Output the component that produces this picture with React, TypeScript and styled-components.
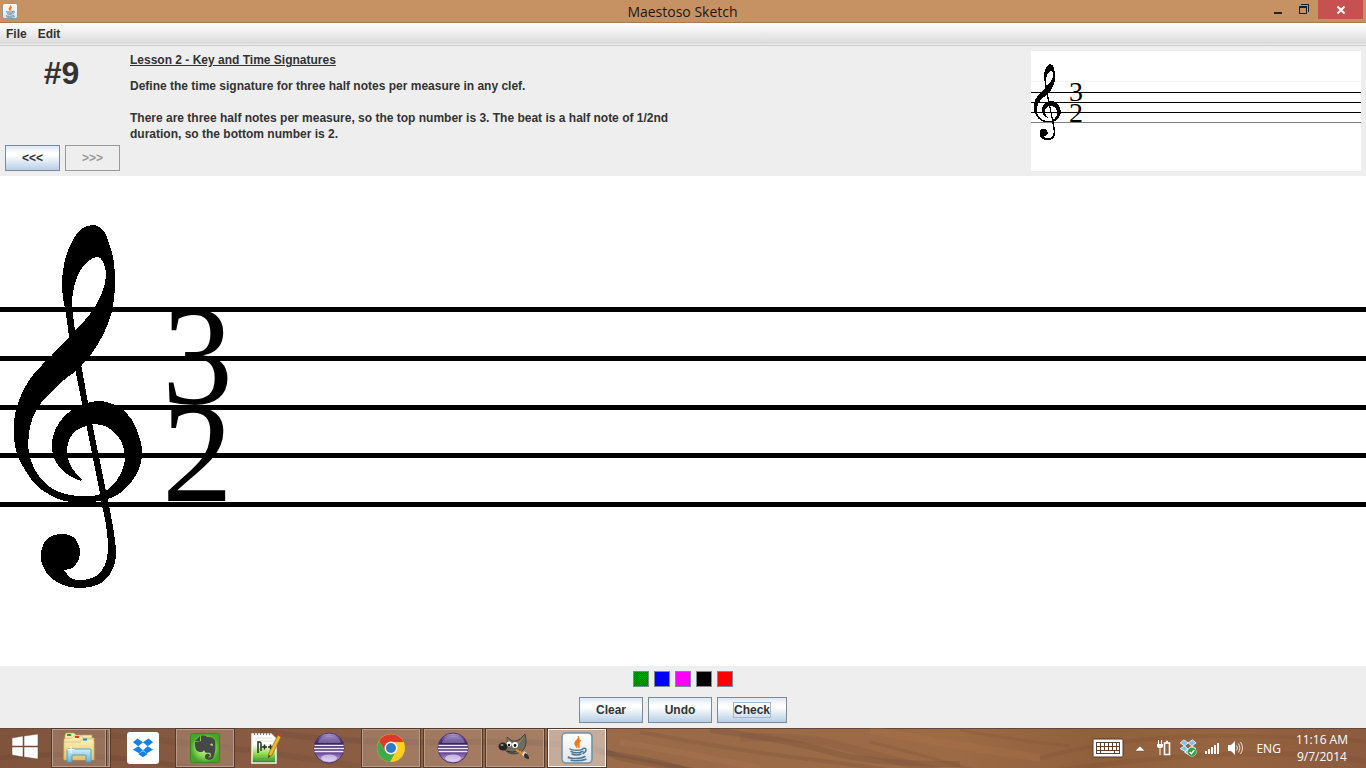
import React from "react";
import styled, { createGlobalStyle, css } from "styled-components";

const GlobalStyle = createGlobalStyle`
  * { box-sizing: border-box; }
  body { margin: 0; }
  button { font: inherit; color: inherit; }
`;

const ui = `"Open Sans", "Noto Sans", sans-serif`;
const swing = `"Liberation Sans", Arial, sans-serif`;

const Desktop = styled.div`
  display: flex;
  flex-direction: column;
  min-height: 100vh;
  background: #eee;
  color: #333;
  font: bold 12px/16px ${swing};
`;

/* ---------- window frame ---------- */

const TitleBar = styled.header`
  display: grid;
  grid-template-columns: 1fr auto 1fr;
  height: 23px;
  padding: 0 3px 0 2px;
  background: #c69264;
  border-bottom: 1px solid #a87a52;
`;

const AppIcon = styled.span`
  display: flex;
  padding-top: 3px;
`;

const WindowTitle = styled.h1`
  margin: 0;
  color: #1d1814;
  font: 14px/24px ${ui};
`;

const WindowControls = styled.div`
  display: flex;
  justify-content: flex-end;
  align-items: flex-start;
`;

const WindowButton = styled.button<{ $close?: boolean }>`
  display: flex;
  width: ${(p) => (p.$close ? 45 : 27)}px;
  height: 19px;
  padding: 0;
  align-items: center;
  justify-content: center;
  border: 0;
  background: ${(p) => (p.$close ? "#c75050" : "transparent")};
`;

const MenuBar = styled.nav`
  display: flex;
  height: 23px;
  background: linear-gradient(#fff, #dadada 21px, #eee 21px);
  border-bottom: 1px solid #ccc;
`;

const MenuButton = styled.button`
  padding: 0 5px 0 6px;
  border: 0;
  background: none;
  line-height: 21px;
`;

/* ---------- lesson header ---------- */

const LessonHeader = styled.section`
  display: flex;
  min-height: 130px;
  padding: 5px;
`;

const LessonNav = styled.div`
  display: flex;
  flex-direction: column;
  justify-content: space-between;
  width: 115px;
  margin-right: 10px;
`;

const LessonNumber = styled.div`
  padding: 6px 2px 0 0;
  font-size: 32px;
  line-height: 32px;
  text-align: center;
`;

const ButtonRow = styled.div`
  display: flex;
  justify-content: center;
  gap: 5px;
`;

const SwingButton = styled.button<{ $width: number }>`
  width: ${(p) => p.$width}px;
  height: 26px;
  padding: 0;
  border: 1px solid #7a8a99;
  background: linear-gradient(#dde8f3, #fff 30%, #fff 38%, #b8cfe5);
  line-height: 16px;
  &:disabled {
    color: #999;
    border-color: #999;
    background: #eee;
  }
`;

const FocusedLabel = styled.span`
  outline: 1px solid #a3b8cc;
`;

const LessonText = styled.div`
  flex: 1;
`;

const LessonTitle = styled.h2`
  margin: 0 0 10px;
  padding-top: 1px;
  font-size: 12px;
  line-height: 16px;
  text-decoration: underline;
`;

const LessonParagraph = styled.p`
  max-width: 560px;
  margin: 0 0 16px;
`;

const Preview = styled.svg`
  width: 330px;
  height: 120px;
  background: #fff;
`;

/* ---------- sketching area ---------- */

const Sketch = styled.main`
  display: flex;
  flex: 1;
  min-height: 420px;
  background: #fff;
`;

const SketchSvg = styled.svg`
  width: 100%;
`;

const ToolPanel = styled.section`
  display: flex;
  flex-direction: column;
  gap: 10px;
  padding: 5px 0;
`;

const Swatch = styled.button<{ $color: string }>`
  width: 16px;
  height: 16px;
  padding: 0;
  border: 1px solid #7a8a99;
  background: ${(p) => p.$color};
`;

/* ---------- taskbar ---------- */

const TaskBar = styled.footer`
  position: relative;
  display: flex;
  height: 40px;
  padding-right: 18px;
  align-items: stretch;
  overflow: hidden;
  background: linear-gradient(90deg, #80543c, #8a5d43 25%, #9a6a49 45%, #9c6a45 70%, #90603c 80%, #966440 90%, #8c5a3e);
  box-shadow: inset 0 1px #63493b;
`;

const Grain = styled.svg`
  position: absolute;
  inset: 0;
  width: 100%;
  height: 100%;
`;

const StartButton = styled.button`
  position: relative;
  width: 51px;
  padding: 0 2px 0 0;
  border: 0;
  background: none;
`;

const TaskList = styled.div`
  position: relative;
  display: flex;
  flex: 1;
  gap: 2px;
`;

const TaskButton = styled.button<{ $state?: "open" | "active" | "stacked" }>`
  display: flex;
  width: 60px;
  padding: 0;
  align-items: center;
  justify-content: center;
  border: 1px solid transparent;
  background: none;
  ${(p) =>
    p.$state &&
    css`
      border-color: #55392b;
      background: ${p.$state === "active" ? "rgba(235,228,220,.55)" : "rgba(210,190,175,.27)"};
      box-shadow: inset 0 0 0 1px ${p.$state === "active" ? "#f7f2ee" : "#b59c8d"};
    `}
  ${(p) =>
    p.$state === "stacked" &&
    css`
      padding-right: 5px;
      background: linear-gradient(90deg, transparent 53px, #b59c8d 53px, #b59c8d 54px, #55392b 54px, #55392b 55px, transparent 55px),
        rgba(210, 190, 175, 0.27);
    `}
`;

const Tray = styled.div`
  position: relative;
  display: flex;
  align-items: center;
  gap: 7px;
  color: #fff;
  font: 12px/17px ${ui};
`;

const TrayButton = styled.button`
  display: flex;
  padding: 0;
  border: 0;
  background: none;
`;

const Language = styled(TrayButton)`
  margin: 0 8px 0 6px;
`;

const Clock = styled.time`
  text-align: center;
`;

/* ---------- clef drawing ---------- */

type Point = [number, number];

/* Joins smooth runs of points with corners where one run meets the next. */
const outline = (...runs: Point[][]) =>
  runs
    .map((run, r) => {
      let d = r === 0 ? `M${run[0]}` : `L${run[0]}`;
      for (let i = 0; i < run.length - 1; i++) {
        const p0 = run[Math.max(i - 1, 0)];
        const p1 = run[i];
        const p2 = run[i + 1];
        const p3 = run[Math.min(i + 2, run.length - 1)];
        d += `C${p1[0] + (p2[0] - p0[0]) / 6},${p1[1] + (p2[1] - p0[1]) / 6} ${p2[0] - (p3[0] - p1[0]) / 6},${p2[1] - (p3[1] - p1[1]) / 6} ${p2}`;
      }
      return d;
    })
    .join("") + "Z";

const clefBody = outline(
  [
    [76, 195], [64, 204], [53, 214], [41, 227], [33, 241], [29, 257], [29, 277], [35, 294], [45, 307], [59, 316],
    [77, 320], [92, 320], [101, 318],
  ],
  [[107, 314], [117, 304], [123, 292], [125, 280], [122, 267], [115, 257], [105, 250], [93, 248]],
  [[87, 250], [77, 254], [70, 262], [67, 273], [69, 286], [75, 296], [82, 303]],
  [[81, 305], [72, 301], [63, 295], [56, 286], [52, 274], [53, 260], [59, 247], [68, 237], [81, 229], [97, 225], [110, 227], [122, 233], [132, 244], [138, 257], [142, 272], [141, 286], [136, 299], [127, 311], [117, 319], [108, 323]],
  [[100, 325], [82, 327], [65, 325], [50, 319], [36, 309], [25, 294], [17, 278], [14, 262], [14, 245], [18, 227], [25, 211], [33, 199], [42, 189], [52, 179], [69, 161]],
  [
    [69, 161], [66, 138], [63, 122], [62, 104], [65, 84], [71, 68], [80, 54], [92, 49], [103, 54], [110, 70],
    [114, 87], [115, 105], [114, 123], [111, 139], [104, 157], [96, 171], [90, 180], [82, 189], [76, 195],
  ]
);

const clefHole = outline(
  [[75, 154], [73, 139], [72, 124], [75, 107], [80, 95], [87, 86], [97, 81], [103, 86], [106, 99], [103, 114], [95, 131], [85, 144], [75, 154]]
);

const clefStem = outline(
  [[69, 161], [82, 228]],
  [[82, 228], [100, 317]],
  [[100, 317], [102, 329], [105, 343], [107, 357], [108, 374], [105, 389], [96, 400], [82, 404], [71, 402], [64, 394]],
  [[64, 394], [72, 392], [78, 385], [80, 375], [76, 364], [69, 359], [59, 358], [48, 362], [42, 372], [41, 384], [46, 396], [54, 404], [66, 410], [82, 412], [97, 409], [107, 402], [114, 390], [116, 375], [114, 357], [111, 340], [108, 325]],
  [[108, 325], [88, 227]],
  [[88, 227], [75, 154]]
);

const TrebleClef = () => (
  <g fill="#000" shapeRendering="crispEdges">
    <path d={clefBody + clefHole} fillRule="evenodd" />
    <path d={clefStem} />
  </g>
);

/* ---------- icons ---------- */

const JavaIcon = ({ size }: { size: number }) => (
  <svg width={size} height={size} viewBox="0 0 32 32" aria-hidden="true">
    <defs>
      <linearGradient id="javaTile" x2="0" y2="1">
        <stop offset="0" stopColor="#fff" />
        <stop offset="1" stopColor="#dfe3e6" />
      </linearGradient>
    </defs>
    <rect x="1" y="1" width="30" height="30" rx="4" fill="url(#javaTile)" stroke="#6f93ab" strokeWidth="1.6" />
    <path d="M17 4c2 3-5 5-3 9l2 3c-1-5 5-6 1-12zM20 8c-3 1-5 4-2 8 1-3-1-4 2-8z" fill="#ec7a1c" stroke="#ec7a1c" strokeWidth=".7" />
    <g fill="none" stroke="#4d7896" strokeLinecap="round" strokeWidth="1.5">
      <path d="M9 17c2 1.500 11 1.500 13 0M10 19.500c3 1.500 8 1.500 12-.3M11 22c2 1.200 7 1.200 9 0M22 16.500c4-1.500 4 3 0 5M8 25c-4 1 10 3 16-.5M10 28.200c5 .8 11 .5 15-1" />
    </g>
  </svg>
);

const WindowsIcon = () => (
  <svg width="28" height="27" viewBox="0 0 28 27" fill="#fff" stroke="#6b4633" strokeWidth=".5" aria-hidden="true">
    <path d="M1 5l11-2v10H1zM13 3l14-2v12H13zM1 14h11v10L1 22zM13 14h14v12l-14-2z" />
  </svg>
);

const FolderIcon = () => (
  <svg width="32" height="32" viewBox="0 0 32 32" aria-hidden="true">
    <defs>
      <linearGradient id="folder" x2="0" y2="1">
        <stop offset="0" stopColor="#fbf1b8" />
        <stop offset="1" stopColor="#e3c466" />
      </linearGradient>
      <linearGradient id="tray" x2="0" y2="1">
        <stop offset="0" stopColor="#d3effa" />
        <stop offset="1" stopColor="#63b3da" />
      </linearGradient>
    </defs>
    <path d="M2 3l1-2h8l2 2h16v24H1z" fill="url(#folder)" stroke="#bd9c4c" strokeWidth=".7" />
    <path d="M4 2h4v2H4z" fill="#15ad2e" />
    <path d="M1 7l8-1 2-2h8l1 2h11v21H1z" fill="url(#folder)" stroke="#cfb163" strokeWidth=".6" />
    <path d="M12 4h4v2h-4z" fill="#d5431f" />
    <path d="M1 10h16l2-3h11l1 3v18H1z" fill="url(#folder)" stroke="#cfb163" strokeWidth=".6" />
    <path d="M20 6.500h4v2h-4z" fill="#1686d8" />
    <path d="M4 30V18q0-1 1-1h22q1 0 1 1v12h-5v-6q0-1-1-1H10q-1 0-1 1v6z" fill="url(#tray)" stroke="#4b9dc4" strokeWidth=".9" />
    <path d="M8 14v7M4.500 17.500h7" stroke="#fff" />
  </svg>
);

const boxes = "M9 7l7 5-6 5-7-5zM23 7l6 5-7 5-6-5zM10 17l6 5-5 4-8-4.500zM22 17l7 4.500-8 4.500-5-4zM16 23l6 4-6 4-6-4z";

const DropboxIcon = () => (
  <svg width="32" height="32" viewBox="0 0 32 32" aria-hidden="true">
    <rect width="32" height="32" rx="3" fill="#fff" />
    <path transform="translate(3.500 1) scale(.78)" d={boxes} fill="#1381e5" />
  </svg>
);

const EvernoteIcon = () => (
  <svg width="32" height="32" viewBox="0 0 32 32" aria-hidden="true">
    <defs>
      <radialGradient id="ever">
        <stop offset="0" stopColor="#d6f5a4" />
        <stop offset=".6" stopColor="#8ad655" />
        <stop offset="1" stopColor="#45a528" />
      </radialGradient>
    </defs>
    <rect x="1.500" y="1.500" width="29" height="29" rx="2" fill="url(#ever)" stroke="#3c861f" />
    <path d="M12 4c3-1 5 0 6 1 5 0 7 1 8 4 1 5 0 14-2 17-2 3-8 2-8-1 0-4 5-4 5-1l-2 1c1 1 3 1 3-2 0-4-4-1-6-3l-1-2c-1 3-5 2-7 1-2-2-2-6-2-9l6-1z" fill="#454844" />
    <path d="M11 4v5H6z" fill="#454844" />
    <path d="M21 13c1-2 3-2 3 1z" fill="#a8dc70" />
  </svg>
);

const NotepadIcon = () => (
  <svg width="32" height="32" viewBox="0 0 32 32" aria-hidden="true">
    <defs>
      <linearGradient id="note" x2="0" y2="1">
        <stop offset=".35" stopColor="#fff" />
        <stop offset=".7" stopColor="#8bdb45" />
        <stop offset="1" stopColor="#16851c" />
      </linearGradient>
    </defs>
    <path d="M1 2h19l5 5v24H1z" fill="url(#note)" stroke="#f5f5ef" strokeWidth="1.500" />
    <path d="M3 2h18" stroke="#777" strokeWidth="2" strokeDasharray="1 2" />
    <path d="M4 6h17M4 9h20M4 25h20M4 28h20" stroke="#a2bb99" strokeWidth=".4" />
    <path d="M7 21V10h2q1 0 1 2v7M11 15h5M13.500 12.500v5M17 15h5M19.500 12.500v5" fill="none" stroke="#232d20" strokeWidth="1.500" />
    <path d="M17 26l1-5L27 3l3 2-9 18z" fill="#f2b927" stroke="#9c681c" strokeWidth=".8" />
    <path d="M27 3l1-2 3 1-1 3z" fill="#b74435" />
    <path d="M17 26l1-3 1.500 1z" fill="#4a351e" />
  </svg>
);

const EclipseIcon = () => (
  <svg width="32" height="32" viewBox="0 0 32 32" aria-hidden="true">
    <defs>
      <linearGradient id="ecl" x2="0" y2="1">
        <stop offset="0" stopColor="#b9a6d6" />
        <stop offset=".2" stopColor="#5d4288" />
        <stop offset=".42" stopColor="#2d1750" />
        <stop offset=".65" stopColor="#64458f" />
        <stop offset="1" stopColor="#d2bdf0" />
      </linearGradient>
    </defs>
    <circle cx="16" cy="16" r="15" fill="url(#ecl)" stroke="#4c326e" />
    <path d="M5 11C7 2 25 1 28 11z" fill="#c8b9e0" opacity=".38" />
    <path d="M1.500 13.500h29M1 16.500h30M1.500 19.500h29" stroke="#f0eaf8" strokeWidth="1.400" />
    <ellipse cx="16" cy="26" rx="8" ry="3.500" fill="#f3e9ff" opacity=".6" />
  </svg>
);

const ChromeIcon = () => (
  <svg width="32" height="32" viewBox="0 0 32 32" aria-hidden="true">
    <circle cx="16" cy="16" r="14" fill="#fbcf22" />
    <path d="M4 9A14 14 0 0 1 28.500 10H16L10 19z" fill="#dc3b2b" />
    <path d="M4 9A14 14 0 0 0 15 30l6-11-5 3-6-3z" fill="#3faa4a" />
    <circle cx="16" cy="16" r="6.500" fill="#f8f8f5" />
    <circle cx="16" cy="16" r="5" fill="#2f7ac5" />
  </svg>
);

const GimpIcon = () => (
  <svg width="34" height="32" viewBox="0 0 34 32" aria-hidden="true">
    <path d="M8 14C10 10 9 7 9 5l5 4c3 1 8-1 11-5l2-2c2 8 1 14-3 17-5 4-13 4-17-1z" fill="#706c5d" stroke="#454239" />
    <path d="M9 6l5 5c5 1 9-2 12-7-2 7-8 11-15 10z" fill="#969080" opacity=".6" />
    <circle cx="11" cy="12" r="2.600" fill="#fff" />
    <circle cx="17" cy="13" r="3" fill="#fff" />
    <circle cx="11" cy="13" r="1.200" fill="#111" />
    <circle cx="17" cy="13.500" r="1.400" fill="#111" />
    <ellipse cx="5" cy="14.500" rx="4.500" ry="4" fill="#252525" />
    <ellipse cx="4" cy="13" rx="1.500" ry="1" fill="#999" />
    <path d="M9 19c5 2 9 1 13-1" fill="none" stroke="#252525" />
    <path d="M18 18l8 4" stroke="#e48b22" strokeWidth="2.500" />
    <path d="M25 21l3 2" stroke="#ddd" strokeWidth="4" />
    <path d="M27 21c3 1 4 3 4 6-3 0-5-1-5-4z" fill="#33322f" />
  </svg>
);

const KeyboardIcon = () => (
  <svg width="32" height="20" viewBox="0 0 32 20" aria-hidden="true">
    <rect x="1" y="1" width="30" height="18" rx="1" fill="#fff" stroke="#543829" />
    <path d="M4 4h24v12H4z" fill="#59402f" />
    <g fill="none" stroke="#fff" strokeWidth="3" shapeRendering="crispEdges">
      <path d="M5 6.500h22M5 10.500h22" strokeDasharray="3 1" />
      <path d="M5 14h3M9 14h13M23 14h4" strokeWidth="2" />
    </g>
  </svg>
);

const BatteryIcon = () => (
  <svg width="16" height="16" viewBox="0 0 16 16" fill="none" stroke="#fff" aria-hidden="true">
    <path d="M8.500 3v11.500h5V3zM10 1.500h2" strokeWidth="1.600" />
    <path d="M2.500 0v4M5.500 0v4M1 4.500h6M4 6v9" />
    <path d="M1 4h6v2q0 2-3 2T1 6z" fill="#fff" stroke="none" />
  </svg>
);

const TrayDropboxIcon = () => (
  <svg width="18" height="18" viewBox="0 0 32 32" aria-hidden="true">
    <path transform="translate(-1 -6) scale(1.080)" d={boxes} fill="#7ec1ee" stroke="#eaf6ff" strokeWidth="1.500" />
    <circle cx="23" cy="23" r="8" fill="#32a047" stroke="#d5efd8" />
    <path d="M19 23l3 3 5-6" fill="none" stroke="#fff" strokeWidth="2.500" />
  </svg>
);

const SignalIcon = () => (
  <svg width="16" height="16" viewBox="0 0 16 16" fill="#fff" aria-hidden="true">
    <path d="M1 11h2v3H1zM4 9h2v5H4zM7 7h2v7H7zM10 5h2v9h-2zM13 3h2v11h-2z" />
  </svg>
);

const SpeakerIcon = () => (
  <svg width="16" height="16" viewBox="0 0 16 16" aria-hidden="true">
    <path d="M1 5h3l4-4v14l-4-4H1z" fill="#fff" />
    <path d="M9.500 5.500q2 2.500 0 5M11.500 3.500q3 4.500 0 9M13.500 2q4 6 0 12" fill="none" stroke="#fff" strokeWidth=".8" />
  </svg>
);

const grain: [string, string, number, number][] = [
  ["M0 30Q60 22 150 34T300 46", "#5b3829", 5, 0.2],
  ["M60 4Q190 12 330 34T480 44", "#6a4430", 6, 0.2],
  ["M260 2Q330 16 460 14T620 30L700 44", "#5f4433", 6, 0.25],
  ["M600 24Q660 32 700 46", "#62463a", 5, 0.3],
  ["M640 4Q720 20 800 30T900 44", "#6f4a38", 4, 0.2],
  ["M710 2Q790 12 830 24T960 36", "#6c4939", 6, 0.25],
  ["M740 10Q800 6 850 20T940 44", "#7a513b", 8, 0.2],
  ["M870 14Q920 26 980 44", "#754b33", 3, 0.2],
  ["M960 2Q1000 10 1070 18", "#7b4a2d", 3, 0.2],
  ["M1040 30Q1130 6 1240 8T1366 14", "#5f3a27", 4, 0.12],
  ["M1050 44Q1150 28 1240 26T1366 34", "#6a4029", 5, 0.14],
  ["M870 2Q960 18 1040 30", "#b27d4d", 8, 0.2],
  ["M620 14Q680 24 760 40", "#b38259", 6, 0.2],
];

const tasks: { name: string; icon: React.ReactNode; state?: "open" | "active" | "stacked" }[] = [
  { name: "File Explorer", icon: <FolderIcon />, state: "stacked" },
  { name: "Dropbox", icon: <DropboxIcon /> },
  { name: "Evernote", icon: <EvernoteIcon />, state: "open" },
  { name: "Notepad++", icon: <NotepadIcon /> },
  { name: "Eclipse", icon: <EclipseIcon /> },
  { name: "Chrome", icon: <ChromeIcon />, state: "open" },
  { name: "Eclipse workspace", icon: <EclipseIcon />, state: "open" },
  { name: "GIMP", icon: <GimpIcon />, state: "open" },
  { name: "Maestoso Sketch", icon: <JavaIcon size={32} />, state: "active" },
];

const inks = [
  { name: "Green", color: "repeating-conic-gradient(#007800 0 25%, #00a000 0 50%) 0 0 / 2px 2px" },
  { name: "Blue", color: "#00f" },
  { name: "Magenta", color: "#f0f" },
  { name: "Black", color: "#000" },
  { name: "Red", color: "#f00" },
];

export default function App() {
  return (
    <Desktop>
      <GlobalStyle />
      <TitleBar>
        <AppIcon>
          <JavaIcon size={16} />
        </AppIcon>
        <WindowTitle>Maestoso Sketch</WindowTitle>
        <WindowControls>
          <WindowButton aria-label="Minimize">
            <svg width="10" height="10">
              <path d="M1 7h8v2H1z" fill="#222" />
            </svg>
          </WindowButton>
          <WindowButton aria-label="Restore">
            <svg width="12" height="12" fill="none" stroke="#222" shapeRendering="crispEdges">
              <path d="M.5 3v6.500h7V3M2 .5h7.500V8" />
              <path d="M0 3h8" strokeWidth="2" />
            </svg>
          </WindowButton>
          <WindowButton aria-label="Close" $close>
            <svg width="10" height="10" stroke="#fff" strokeWidth="2">
              <path d="M1.500 1.500l7 7M8.500 1.500l-7 7" />
            </svg>
          </WindowButton>
        </WindowControls>
      </TitleBar>

      <MenuBar>
        <MenuButton>File</MenuButton>
        <MenuButton>Edit</MenuButton>
      </MenuBar>

      <LessonHeader>
        <LessonNav>
          <LessonNumber>#9</LessonNumber>
          <ButtonRow>
            <SwingButton $width={55}>&lt;&lt;&lt;</SwingButton>
            <SwingButton $width={55} disabled>
              &gt;&gt;&gt;
            </SwingButton>
          </ButtonRow>
        </LessonNav>
        <LessonText>
          <LessonTitle>Lesson 2 - Key and Time Signatures</LessonTitle>
          <LessonParagraph>Define the time signature for three half notes per measure in any clef.</LessonParagraph>
          <LessonParagraph>
            There are three half notes per measure, so the top number is 3. The beat is a half note of 1/2nd duration, so
            the bottom number is 2.
          </LessonParagraph>
        </LessonText>
        <Preview role="img" aria-label="Answer preview">
          <g shapeRendering="crispEdges">
            <rect y="30" width="100%" height="1" fill="#f4f4f4" />
            <rect y="41" width="100%" height="1" />
            <rect y="51" width="100%" height="1" />
            <rect y="61" width="100%" height="1" />
            <rect y="71" width="100%" height="1" fill="#808080" />
          </g>
          <g transform="translate(0 3) scale(.209)">
            <TrebleClef />
          </g>
          <g fontFamily="Liberation Serif, serif" fontSize="28" fontWeight="400">
            <text x="38" y="50">3</text>
            <text x="38" y="71">2</text>
          </g>
        </Preview>
      </LessonHeader>

      <Sketch>
        <SketchSvg role="img" aria-label="Staff with treble clef and time signature">
          {[131, 180, 229, 277, 326].map((y) => (
            <rect key={y} y={y} width="100%" height="5" />
          ))}
          <TrebleClef />
          <g fontFamily="Liberation Serif, serif" fontSize="142" fontWeight="400">
            <text x="162" y="228">3</text>
            <text x="162" y="325">2</text>
          </g>
        </SketchSvg>
      </Sketch>

      <ToolPanel>
        <ButtonRow>
          {inks.map((ink) => (
            <Swatch key={ink.name} aria-label={ink.name} $color={ink.color} />
          ))}
        </ButtonRow>
        <ButtonRow>
          <SwingButton $width={64}>Clear</SwingButton>
          <SwingButton $width={64}>Undo</SwingButton>
          <SwingButton $width={70}>
            <FocusedLabel>Check</FocusedLabel>
          </SwingButton>
        </ButtonRow>
      </ToolPanel>

      <TaskBar>
        <Grain viewBox="0 0 1366 40" preserveAspectRatio="none" fill="none" aria-hidden="true">
          {grain.map(([d, color, width, opacity]) => (
            <path key={d} d={d} stroke={color} strokeWidth={width} opacity={opacity} />
          ))}
        </Grain>
        <StartButton aria-label="Start">
          <WindowsIcon />
        </StartButton>
        <TaskList>
          {tasks.map((task) => (
            <TaskButton key={task.name} aria-label={task.name} $state={task.state}>
              {task.icon}
            </TaskButton>
          ))}
        </TaskList>
        <Tray>
          <TrayButton aria-label="Touch keyboard">
            <KeyboardIcon />
          </TrayButton>
          <TrayButton aria-label="Show hidden icons">
            <svg width="18" height="10">
              <path d="M4 8l5-5 5 5z" fill="#fff" stroke="#6b4633" strokeWidth=".5" />
            </svg>
          </TrayButton>
          <TrayButton aria-label="Power">
            <BatteryIcon />
          </TrayButton>
          <TrayButton aria-label="Dropbox status">
            <TrayDropboxIcon />
          </TrayButton>
          <TrayButton aria-label="Network">
            <SignalIcon />
          </TrayButton>
          <TrayButton aria-label="Volume">
            <SpeakerIcon />
          </TrayButton>
          <Language>ENG</Language>
          <Clock>
            11:16 AM
            <br />
            9/7/2014
          </Clock>
        </Tray>
      </TaskBar>
    </Desktop>
  );
}
